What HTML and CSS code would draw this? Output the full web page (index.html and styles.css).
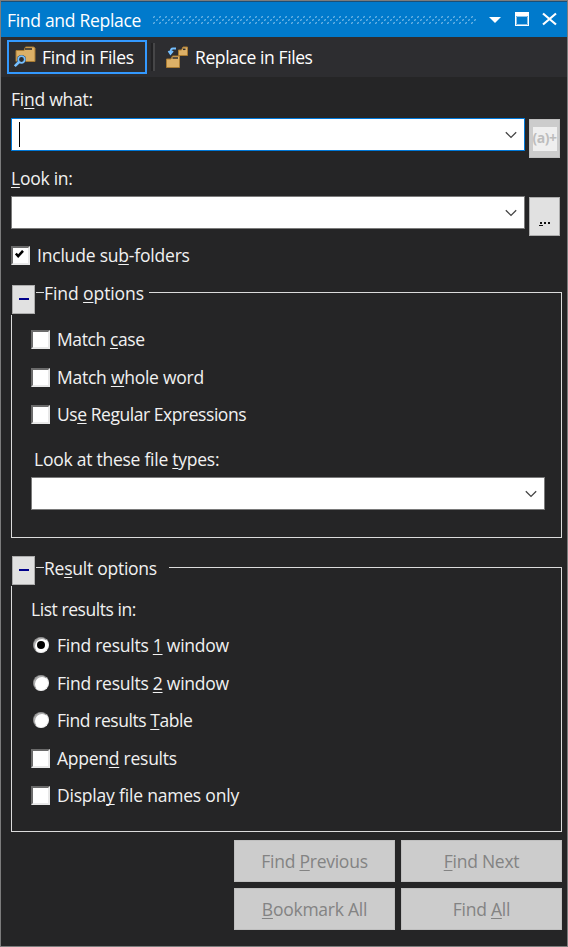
FILE: index.html
```html
<!DOCTYPE html>
<html lang="en">
<head>
<meta charset="utf-8">
<title>Find and Replace</title>
<link rel="stylesheet" href="styles.css">
</head>
<body>
<div class="window">
  <header class="titlebar">
    <span class="title">Find and Replace</span>
    <svg class="grip" width="324" height="8" shape-rendering="crispEdges">
      <defs><pattern id="dots" width="6" height="6" patternUnits="userSpaceOnUse">
        <path d="M0 0h2v2H0zM3 3h2v2H3z" fill="#59a8de" opacity=".55"/>
        <path d="M1 0h1v1H1zM0 1h1v1H0zM4 3h1v1H4zM3 4h1v1H3z" fill="#66b1e3"/>
      </pattern></defs>
      <rect width="324" height="8" fill="url(#dots)"/>
    </svg>
    <svg class="controls" width="70" height="16" viewBox="0 0 70 16">
      <path d="M0 5h12L6 11z" fill="#fff"/>
      <path d="M26 0h14v14H26zM27 4v9h12V4z" fill="#fff" fill-rule="evenodd"/>
      <path d="M27.5 4.5h11v8h-11z" fill="none" stroke="#8dc5eb"/>
      <path d="M54 1.500L67 12.500M67 1.500L54 12.500" stroke="#fff" stroke-width="2.200"/>
    </svg>
  </header>
  <nav class="toolbar">
    <div class="tab active">
      <svg class="tab-icon" width="22" height="22" viewBox="0 0 22 22">
        <path d="M2 4.500h8l1.500-3.500h8l1.500 1v13.500H2z" fill="#dcb067" stroke="#a97b32"/>
        <path d="M11 3h7" stroke="#2d2d30" stroke-width="1.600"/>
        <path d="M6.500 14.500L1 20" stroke="#2d2d30" stroke-width="4"/>
        <circle cx="7.500" cy="13.500" r="4.500" fill="#2d2d30"/>
        <circle cx="7.500" cy="13.500" r="3.300" fill="#2d2d30" stroke="#75bfff" stroke-width="1.800"/>
        <path d="M5 16L.8 20.200" stroke="#75bfff" stroke-width="2.600"/>
      </svg>
      <span class="wide">Find in Files</span>
    </div>
    <div class="separator"></div>
    <div class="tab">
      <svg class="tab-icon" width="22" height="22" viewBox="0 0 22 22">
        <path d="M12.500 4h3l1.500-3h4.500v8.500h-9z" fill="#dcb067" stroke="#a97b32"/>
        <path d="M17 3.300h2.500" stroke="#2d2d30" stroke-width="1.500"/>
        <path d="M.5 13h4.500l1.500-3h7v11.500H.5z" fill="#dcb067" stroke="#a97b32"/>
        <path d="M6.500 12h5.500" stroke="#2d2d30" stroke-width="1.500"/>
        <path d="M10 2.500H7Q4.500 2.500 4.500 7M2.500 5l2 3 2.500-3" fill="none" stroke="#75bfff" stroke-width="1.800"/>
      </svg>
      <span class="normal">Replace in Files</span>
    </div>
  </nav>
  <main class="content">
    <div class="label l-find"><span>Fi<u>n</u>d what:</span></div>
    <div class="field">
      <div class="combo focused"><i class="caret"></i><svg class="chevron" width="12" height="8"><path d="M.8 1.200L6 6.400L11.200 1.200" fill="none" stroke="#444" stroke-width="1.300"/></svg></div>
      <div class="side-button disabled"><span class="regex">(a)+</span></div>
    </div>
    <div class="label l-look"><span><u>L</u>ook in:</span></div>
    <div class="field">
      <div class="combo"><svg class="chevron" width="12" height="8"><path d="M.8 1.200L6 6.400L11.200 1.200" fill="none" stroke="#444" stroke-width="1.300"/></svg></div>
      <div class="side-button"><svg class="dots" width="12" height="5" shape-rendering="crispEdges"><path d="M1 0h2v2H1zM5 0h2v2H5zM9 0h2v2H9zM0 3h4v1H0z" fill="#111"/></svg></div>
    </div>
    <div class="option include"><span class="check"><svg width="10" height="10"><path d="M.8 3.500L3.200 6.200L8 .8" fill="none" stroke="#000" stroke-width="2.500"/></svg></span><span class="wider">Include su<u>b</u>-folders</span></div>

    <section class="group find">
      <div class="group-head"><div class="toggle"></div><i class="stub"></i><span class="head-text widest">Find <u>o</u>ptions</span><i class="rule"></i></div>
      <div class="group-body">
        <div class="option"><span class="check"></span><span class="normal">Match <u>c</u>ase</span></div>
        <div class="option"><span class="check"></span><span class="wide">Match <u>w</u>hole word</span></div>
        <div class="option"><span class="check"></span><span class="tight">Us<u>e</u> Regular Expressions</span></div>
        <div class="label l-types"><span>Look at these file <u>t</u>ypes:</span></div>
        <div class="combo"><svg class="chevron" width="12" height="8"><path d="M.8 1.200L6 6.400L11.200 1.200" fill="none" stroke="#444" stroke-width="1.300"/></svg></div>
      </div>
    </section>

    <section class="group result">
      <div class="group-head"><div class="toggle"></div><i class="stub"></i><span class="head-text wide">Re<u>s</u>ult options</span><i class="rule"></i></div>
      <div class="group-body">
        <div class="label l-list"><span class="tight">List results in:</span></div>
        <div class="option"><span class="radio selected"></span><span class="wide">Find results <u>1</u> window</span></div>
        <div class="option"><span class="radio"></span><span class="wide">Find results <u>2</u> window</span></div>
        <div class="option"><span class="radio"></span><span class="tight">Find results <u>T</u>able</span></div>
        <div class="option"><span class="check"></span><span class="wide">Appen<u>d</u> results</span></div>
        <div class="option"><span class="check"></span><span class="wider">Displa<u>y</u> file names only</span></div>
      </div>
    </section>

    <div class="actions">
      <div class="action"><span>Find <u>P</u>revious</span></div>
      <div class="action"><span><u>F</u>ind Next</span></div>
      <div class="action"><span><u>B</u>ookmark All</span></div>
      <div class="action"><span>Find <u>A</u>ll</span></div>
    </div>
  </main>
</div>
</body>
</html>
```
FILE: styles.css
```css
* { box-sizing: border-box; }
body { margin: 0; }
.window {
  width: 568px; height: 947px; overflow: hidden;
  border: 1px solid #7c7c7c;
  background: #252526; color: #f1f1f1;
  font: 17.5px/24px "Open Sans", "Noto Sans", sans-serif;
  letter-spacing: -0.25px; white-space: nowrap;
}
.tight { letter-spacing: -0.45px; }
.normal { letter-spacing: -0.4px; }
.wide { letter-spacing: -0.25px; }
.wider { letter-spacing: -0.2px; }
.widest { letter-spacing: -0.08px; }
u { text-decoration: underline; text-decoration-thickness: 1px; text-underline-offset: 2px; text-decoration-skip-ink: none; }
svg { display: block; flex: none; }

.titlebar { height: 36px; border-top: 1px solid #1b4f77; background: #007acc; display: flex; align-items: center; padding-left: 6px; }
.title { width: 146px; color: #fff; padding-top: 1px; letter-spacing: -0.3px; }
.grip { margin-top: 1px; }
.controls { margin-left: 12px; }
.toolbar { height: 40px; background: #2d2d30; display: flex; align-items: center; padding: 0 0 0 6px; }
.tab { height: 34px; display: flex; align-items: center; gap: 7px; padding-left: 11px; color: #fff; }
.active { width: 140px; border: 2px solid #3399ff; padding-left: 5px; gap: 6px; }
.separator { width: 4px; height: 28px; margin-left: 4px; border-left: 2px solid #222224; border-right: 2px solid #464648; }

.content { padding: 0 5px 0 10px; }
.label { display: flex; align-items: center; }
.l-find { height: 41px; padding-top: 3px; }
.l-look { height: 38px; padding-top: 2px; }
.field { display: flex; gap: 4px; height: 40px; }
.combo { width: 514px; height: 33px; border: 1px solid #7a7a7a; background: #fff; display: flex; align-items: center; justify-content: flex-end; padding-right: 7px; }
.focused { border-color: #0078d7; }
.caret { width: 1px; height: 25px; background: #000; margin: 0 auto 0 7px; }
.side-button { width: 31px; height: 39px; margin-top: 1px; border: 1px solid #adadad; background: #e1e1e1; display: flex; justify-content: center; }
.side-button.disabled { border-color: #bfbfbf; background: #ccc; align-items: center; }
.regex { width: 24px; height: 24px; display: flex; justify-content: center; background: #efefef; color: #bdbdbd; font: bold 14px/21px "Open Sans", sans-serif; letter-spacing: -0.5px; }
.dots { margin-top: 24px; }

.option { height: 37.5px; display: flex; align-items: center; gap: 7px; }
.include { height: 38px; }
.check { width: 19px; height: 19px; flex: none; background: #fff; border: 2px solid #6b6b6b; border-right-color: #e8e8e8; border-bottom-color: #e8e8e8; padding: 2px; }
.radio { width: 16px; height: 16px; margin: 0 1px 0 2px; flex: none; border-radius: 50%; background: #fff; border: 1px solid; border-color: #8a8a8a #eee #eee #8a8a8a; box-shadow: inset 1px 1px 0 #a8a8a8; display: flex; align-items: center; justify-content: center; }
.selected::after { content: ""; width: 8px; height: 8px; border-radius: 50%; background: #000; }

.group { width: 551px; }
.group-head { height: 30px; display: flex; padding-left: 1px; }
.toggle { width: 23px; height: 29px; background: #e1e1e1; border: 1px solid #adadad; display: flex; align-items: center; justify-content: center; }
.toggle::after { content: ""; width: 10px; height: 2px; margin-bottom: 1px; background: #00008b; }
.stub { width: 8px; height: 1px; margin-left: 1px; background: #dcdcdc; }
.head-text { width: 105px; margin-top: -4px; }
.rule { flex: 1; border: 1px solid #dcdcdc; border-width: 1px 1px 0 0; }
.group-body { border: 1px solid #dcdcdc; border-top: 0; padding-left: 19px; }
.find { margin-top: 11px; }
.find .stub, .find .rule { margin-top: 7px; }
.find .group-body { height: 223px; padding-top: 6px; }
.find .option span + span { margin-bottom: 1px; }
.result { margin-top: 18px; }
.result .stub, .result .rule { margin-top: 11px; }
.result .head-text { width: 125px; margin-top: 0; }
.result .group-body { height: 246px; }
.result .check { margin-top: 1px; }
.l-types { height: 43.5px; padding: 7.5px 0 0 3px; }
.l-list { height: 40.5px; padding-top: 6px; }
.actions { margin-top: 8px; display: grid; grid-template-columns: 161px 161px; grid-auto-rows: 42px; gap: 6px; justify-content: end; }
.action { background: #ccc; border: 1px solid #bfbfbf; color: #838383; display: flex; align-items: center; justify-content: center; }
```
